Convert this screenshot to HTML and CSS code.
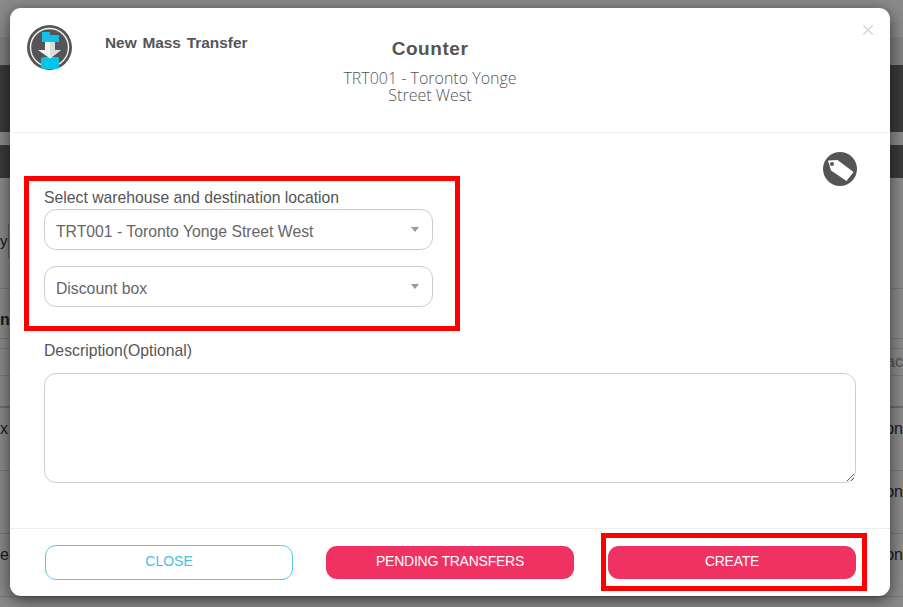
FILE: index.html
```html
<!DOCTYPE html>
<html lang="en">
<head>
    <meta charset="UTF-8">
    <meta name="viewport" content="width=device-width, initial-scale=1.0">
    <title>New Mass Transfer</title>
    <link rel="stylesheet" href="styles.css">
</head>
<body>
    <!-- Page behind the dialog -->
    <div class="page">
        <div class="top-bar"></div>
        <div class="sub-bar"></div>
        <div class="band band-main"></div>
        <div class="band-gap"></div>
        <div class="band band-small"></div>
        <div class="toolbar">
            <span>y</span>
            <div class="toolbar-field"></div>
        </div>
        <div class="row row-head"><span class="bold-frag">n</span></div>
        <div class="row row-thin"></div>
        <div class="row row-filter"><span></span><span class="muted-frag">ac</span></div>
        <div class="row row-spacer"></div>
        <div class="row row-data"><span>x</span><span>on</span></div>
        <div class="row row-data"><span></span><span>on</span></div>
        <div class="row row-data"><span>e</span><span>on</span></div>
    </div>

    <div class="backdrop">
        <div class="modal">
            <div class="modal-header">
                <svg class="transfer-icon" width="45" height="45" viewBox="0 0 45 45">
                    <circle cx="22.5" cy="22.5" r="22.5" fill="#555"/>
                    <circle cx="22.5" cy="22.5" r="19" fill="none" stroke="#f2f2f2" stroke-width="1.4"/>
                    <path d="M15 7h8v3h9v7H15z" fill="#12bfe6"/>
                    <path d="M14 33l4-1h13l1 1v10l-2 1H16l-2-1z" fill="#06c3ea"/>
                    <path d="M18 17h10v8h6L23 33.500 11 25h7z" fill="#f4f4f4"/>
                    <path d="M23 17h5v8h6L23 33.500z" fill="#dcdcdc"/>
                </svg>
                <div class="modal-title">New Mass Transfer</div>
                <div class="modal-center">
                    <h2>Counter</h2>
                    <p>TRT001 - Toronto Yonge Street West</p>
                </div>
                <span class="modal-close">&times;</span>
            </div>

            <div class="modal-body">
                <div class="body-top">
                    <div class="location-box">
                        <label class="field-label">Select warehouse and destination location</label>
                        <div class="select-box">TRT001 - Toronto Yonge Street West</div>
                        <div class="select-box">Discount box</div>
                    </div>
                    <svg class="tag-icon" width="34" height="34" viewBox="0 0 34 34">
                        <circle cx="17" cy="17" r="17" fill="#555"/>
                        <path d="M5 8.500l9.500-.5 16 12-7 9L8 18.500z" fill="#fff"/>
                        <circle cx="9" cy="12" r="2" fill="#555"/>
                    </svg>
                </div>
                <div class="description">
                    <label class="field-label" for="description">Description(Optional)</label>
                    <textarea id="description"></textarea>
                </div>
            </div>

            <div class="modal-footer">
                <button class="btn btn-outline">CLOSE</button>
                <button class="btn btn-pink btn-middle">PENDING TRANSFERS</button>
                <button class="btn btn-pink btn-marked">CREATE</button>
            </div>
        </div>
    </div>
</body>
</html>
```

FILE: styles.css
```css
* {
    margin: 0;
    padding: 0;
    box-sizing: border-box;
}

html, body {
    height: 100%;
    overflow: hidden;
}

body {
    font-family: 'Liberation Sans', Arial, sans-serif;
    background-color: #fff;
    color: #333;
    position: relative;
}

/* Page behind the dialog */
.top-bar {
    height: 37px;
    background-color: #fff;
}

.sub-bar {
    height: 28px;
    background-color: #eee;
}

.band {
    background-color: #6b6b6b;
}

.band-main {
    height: 67px;
}

.band-gap {
    height: 13px;
}

.band-small {
    height: 33px;
}

.toolbar {
    display: flex;
    align-items: center;
    height: 111px;
    padding-top: 15px;
    border-bottom: 1px solid #ddd;
    font-size: 15px;
}

.toolbar-field {
    width: 30px;
    height: 34px;
    margin-left: 0;
    border: 1px solid #bbb;
}

.row {
    display: flex;
    justify-content: space-between;
    align-items: flex-start;
    border-bottom: 1px solid #ddd;
    font-size: 16px;
}

.row-head {
    height: 50px;
    padding-top: 22px;
}

.bold-frag {
    font-weight: bold;
}

.row-thin {
    height: 10px;
}

.row-filter {
    height: 27px;
    padding-top: 4px;
}

.muted-frag {
    color: #999;
}

.row-spacer {
    height: 32px;
    border-bottom: 2px solid #ccc;
}

.row-data {
    height: 63px;
    padding-top: 12px;
}

/* Dialog */
.backdrop {
    position: absolute;
    top: 0;
    left: 0;
    right: 0;
    bottom: 0;
    padding: 8px 0 0 10px;
    background-color: rgba(0, 0, 0, 0.46);
}

.modal {
    position: relative;
    display: flex;
    flex-direction: column;
    width: 880px;
    height: 588px;
    background-color: #fff;
    border-radius: 11px;
    box-shadow: 0 4px 16px rgba(0, 0, 0, 0.6);
}

.modal-header {
    position: relative;
    display: flex;
    height: 125px;
    padding: 17px 0 0 17px;
    border-bottom: 1px solid #eee;
}

.transfer-icon {
    flex: none;
}

.modal-title {
    width: 168px;
    margin: 9px 0 0 33px;
    font-size: 15.4px;
    font-weight: bold;
    line-height: 18px;
    word-spacing: 1.5px;
    color: #555;
}

.modal-center {
    width: 200px;
    margin: 12px 0 0 57px;
    text-align: center;
}

.modal-center h2 {
    font-size: 19px;
    font-weight: bold;
    line-height: 24px;
    letter-spacing: 0.55px;
    color: #555;
}

.modal-center p {
    margin-top: 9px;
    font-family: 'Open Sans', sans-serif;
    font-size: 16px;
    font-weight: 300;
    line-height: 17px;
    color: #555;
}

.modal-close {
    position: absolute;
    top: 9px;
    right: 15px;
    font-size: 24px;
    line-height: 26px;
    color: #ddd;
}

.modal-body {
    flex: 1;
    padding: 0 33px 0 14px;
}

.body-top {
    display: flex;
    justify-content: space-between;
    align-items: flex-start;
}

.location-box {
    width: 436px;
    height: 155px;
    margin-top: 43px;
    padding: 8px 22px 0 15px;
    border: 5px solid #f00;
}

.tag-icon {
    margin-top: 19px;
}

.field-label {
    display: block;
    font-size: 15.75px;
    line-height: 18px;
    color: #555;
}

.select-box {
    position: relative;
    height: 41px;
    margin: 2px 0 16px;
    padding-left: 11px;
    border: 1px solid #ccc;
    border-radius: 12px;
    font-size: 15.75px;
    line-height: 44px;
    color: #666;
}

.select-box + .select-box {
    margin-top: 3px;
}

.select-box::after {
    content: "";
    position: absolute;
    top: 17px;
    right: 13px;
    border-style: solid;
    border-width: 5px 4.5px 0;
    border-color: #999 transparent transparent;
}

.description {
    margin: 11px 1px 0 20px;
}

.description textarea {
    display: block;
    width: 812px;
    height: 110px;
    margin-top: 13px;
    border: 1px solid #ccc;
    border-radius: 12px;
}

.modal-footer {
    display: flex;
    justify-content: space-between;
    align-items: center;
    height: 68px;
    padding: 0 34px 0 35px;
    border-top: 1px solid #eee;
}

.btn {
    width: 248px;
    height: 33px;
    padding-bottom: 3px;
    border: none;
    border-radius: 11px;
    font-family: 'Liberation Sans', Arial, sans-serif;
    font-size: 14px;
    color: #fff;
}

.btn-outline {
    height: 35px;
    background-color: #fff;
    border: 1px solid #5cc5e5;
    color: #45c0e0;
}

.btn-pink {
    background-color: #f03262;
    letter-spacing: -0.25px;
}

.btn-middle {
    margin-right: 1px;
}

.btn-marked {
    position: relative;
}

.btn-marked::after {
    content: "";
    position: absolute;
    top: -13px;
    left: -7px;
    right: -11px;
    bottom: -12px;
    border: 5px solid #f00;
}
```
